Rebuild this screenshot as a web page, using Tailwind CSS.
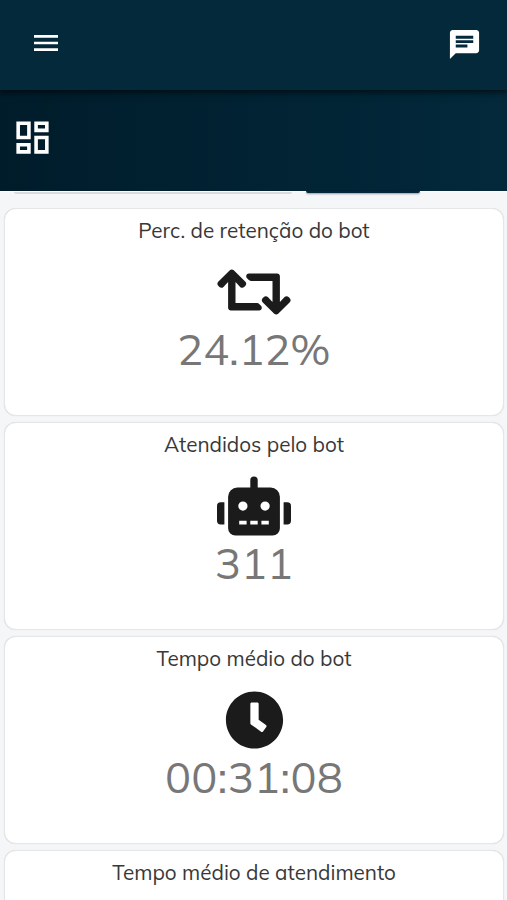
<!DOCTYPE html>
<html lang="pt-BR">
<head>
    <meta charset="UTF-8">
    <meta name="viewport" content="width=device-width, initial-scale=1.0">
    <title>Dashboard</title>
    <script src="https://cdn.jsdelivr.net/npm/@tailwindcss/browser@4"></script>
    <style>
        body {
            font-family: 'Mulish', 'Lato', sans-serif;
        }
    </style>
</head>
<body class="h-screen overflow-hidden bg-[#f5f6f8] flex flex-col">
    <!-- Top bar -->
    <header class="relative z-10 h-[90px] shrink-0 flex items-center justify-between pl-[30px] pr-[25px] pb-1 bg-[#03293b] text-white shadow-[0_1px_7px_1px_rgba(0,0,0,0.7)]">
        <svg class="size-8" viewBox="0 0 24 24" fill="currentColor"><path d="M3 18h18v-2H3v2zm0-5h18v-2H3v2zm0-7v2h18V6H3z"/></svg>
        <svg class="size-[35px] mt-[3px]" viewBox="0 0 24 24" fill="currentColor"><path d="M20 2H4c-1.1 0-1.99.9-1.99 2L2 22l4-4h14c1.1 0 2-.9 2-2V4c0-1.1-.9-2-2-2zM6 9h12v2H6V9zm8 5H6v-2h8v2zm4-6H6V6h12v2z"/></svg>
    </header>

    <!-- Page title bar -->
    <div class="h-[100.5px] shrink-0 flex items-center pl-[11px] pb-[5px] bg-linear-to-r from-[#001c2b] to-[#03293b] text-white">
        <svg class="size-[43px]" viewBox="0 0 24 24" fill="currentColor"><path d="M19 5v2h-4V5h4M9 5v6H5V5h4m10 8v6h-4v-6h4M9 17v2H5v-2h4M21 3h-8v6h8V3zM11 3H3v10h8V3zm10 8h-8v10h8V11zm-10 4H3v6h8v-6z"/></svg>
    </div>

    <!-- Bottom edge of the filters, scrolled under the bar -->
    <div class="h-[17.5px] shrink-0 flex items-start pl-3.5 border-t border-white">
        <div class="h-[2px] w-[278px] rounded-b bg-[#d9dcdf]"></div>
        <div class="-mt-px ml-3.5 h-[2px] w-[114px] rounded-b bg-[#03283a] shadow-[0_1px_2px_rgba(0,0,0,0.4)]"></div>
    </div>

    <main class="flex-1 min-h-0 overflow-hidden flex flex-col gap-1.5 pl-1 pr-[3px] text-center">
        <section class="h-52 shrink-0 flex flex-col items-center rounded-xl border-[1.5px] border-[#e4e6e8] bg-white shadow-[0_0_1px_rgba(0,0,0,0.15)]">
            <h2 class="mt-[7px] h-7 leading-7 text-[20.7px] text-[#383838]">Perc. de retenção do bot</h2>
            <svg class="mt-[18px] w-[74px] h-[60px] text-[#1b1b1b]" viewBox="0 0 640 512" fill="currentColor"><path d="M629.657 343.598L528.971 444.284c-9.373 9.372-24.568 9.372-33.941 0L394.343 343.598c-9.373-9.373-9.373-24.569 0-33.941l10.823-10.823c9.562-9.562 25.133-9.34 34.419.492L480 342.118V160H292.451a24.005 24.005 0 0 1-16.971-7.029l-16-16C244.361 121.851 255.069 96 276.451 96H520c13.255 0 24 10.745 24 24v222.118l40.416-42.792c9.285-9.831 24.856-10.054 34.419-.492l10.823 10.823c9.372 9.372 9.372 24.569-.001 33.941zm-265.138 15.431A23.999 23.999 0 0 0 347.548 352H160V169.881l40.416 42.792c9.286 9.831 24.856 10.054 34.419.491l10.822-10.822c9.373-9.373 9.373-24.569 0-33.941L144.971 67.716c-9.373-9.373-24.569-9.373-33.941 0L10.343 168.402c-9.373 9.373-9.373 24.569 0 33.941l10.822 10.822c9.562 9.562 25.133 9.34 34.419-.491L96 169.881V392c0 13.255 10.745 24 24 24h243.549c21.382 0 32.09-25.851 16.971-40.971l-16.001-16z"/></svg>
            <p class="-mt-px h-14 leading-14 text-[43px] text-[#777777]">24.12%</p>
        </section>

        <section class="h-52 shrink-0 flex flex-col items-center rounded-xl border-[1.5px] border-[#e4e6e8] bg-white shadow-[0_0_1px_rgba(0,0,0,0.15)]">
            <h2 class="mt-[7px] h-7 leading-7 text-[20.7px] text-[#383838]">Atendidos pelo bot</h2>
            <svg class="mt-[18px] w-[74px] h-[60px] text-[#1b1b1b]" viewBox="0 0 640 512" fill="currentColor"><path d="M32,224H64V416H32A31.96166,31.96166,0,0,1,0,384V256A31.96166,31.96166,0,0,1,32,224Zm512-48V448a64.06328,64.06328,0,0,1-64,64H160a64.06328,64.06328,0,0,1-64-64V176a79.974,79.974,0,0,1,80-80H288V32a32,32,0,0,1,64,0V96H464A79.974,79.974,0,0,1,544,176ZM264,256a40,40,0,1,0-40,40A39.997,39.997,0,0,0,264,256Zm-8,128H192v32h64Zm96,0H288v32h64ZM456,256a40,40,0,1,0-40,40A39.997,39.997,0,0,0,456,256Zm-8,128H384v32h64ZM640,256V384a31.96166,31.96166,0,0,1-32,32H576V224h32A31.96166,31.96166,0,0,1,640,256Z"/></svg>
            <p class="-mt-px h-14 leading-14 text-[43.5px] text-[#777777]">311</p>
        </section>

        <section class="h-52 shrink-0 flex flex-col items-center rounded-xl border-[1.5px] border-[#e4e6e8] bg-white shadow-[0_0_1px_rgba(0,0,0,0.15)]">
            <h2 class="mt-[7px] h-7 leading-7 text-[20.7px] text-[#383838]">Tempo médio do bot</h2>
            <svg class="mt-[18px] w-[59px] h-[60px] text-[#1b1b1b]" viewBox="0 0 512 512" fill="currentColor"><path d="M256,8C119,8,8,119,8,256S119,504,256,504,504,393,504,256,393,8,256,8Zm57.1,350.1L224.9,294c-3.1-2.3-4.9-5.9-4.9-9.7V116c0-6.6,5.4-12,12-12h48c6.6,0,12,5.4,12,12V253.7l63.5,46.2c5.4,3.9,6.5,11.4,2.6,16.8l-28.2,38.8c-3.9,5.3-11.4,6.5-16.8,2.6Z"/></svg>
            <p class="-mt-px h-14 leading-14 text-[43.5px] tracking-[0.2px] text-[#777777]">00:31:08</p>
        </section>

        <section class="h-52 shrink-0 flex flex-col items-center rounded-xl border-[1.5px] border-[#e4e6e8] bg-white shadow-[0_0_1px_rgba(0,0,0,0.15)]">
            <h2 class="mt-[7px] h-7 leading-7 text-[20.7px] text-[#383838]">Tempo médio de atendimento</h2>
        </section>
    </main>
</body>
</html>
